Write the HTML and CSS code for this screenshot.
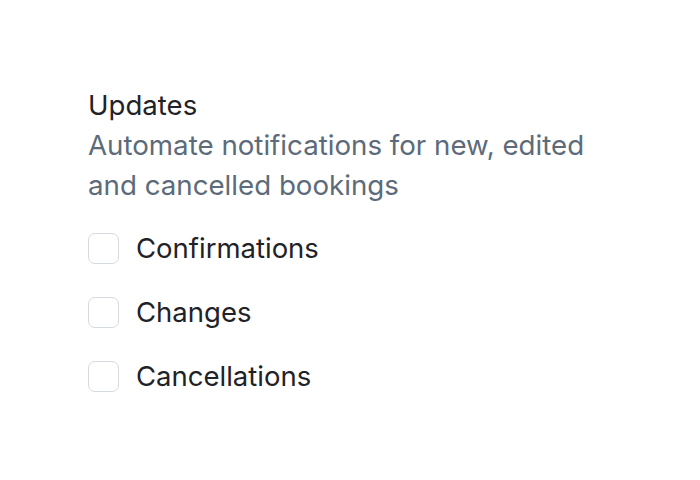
FILE: index.html
```html
<!DOCTYPE html>
<html>
<head>
<meta charset="utf-8">
<link rel="stylesheet" href="styles.css">
</head>
<body>
<div class="panel">
  <div class="title">Updates</div>
  <div class="desc">Automate notifications for new, edited and cancelled bookings</div>
  <div class="options">
    <label class="option"><span class="box"></span><span class="label">Confirmations</span></label>
    <label class="option"><span class="box"></span><span class="label">Changes</span></label>
    <label class="option"><span class="box"></span><span class="label">Cancellations</span></label>
  </div>
</div>
</body>
</html>
```
FILE: styles.css
```css
html, body { margin: 0; background: #fff; }
body { font-family: Inter, "Noto Sans", sans-serif; }
.panel { padding: 85px 88px 0; width: 510px; }
.title { font-size: 27.6px; line-height: 40px; color: #1f2328; }
.desc { font-size: 27.7px; line-height: 40px; color: #5c6b7a; }
.options { display: flex; flex-direction: column; gap: 24px; margin-top: 23px; }
.option { display: flex; align-items: center; gap: 17px; height: 40px; }
.box { box-sizing: border-box; width: 31px; height: 31px; border: 1.5px solid #d5dae0; border-radius: 7px; flex: none; }
.label { font-size: 27.5px; color: #1f2328; }
```
